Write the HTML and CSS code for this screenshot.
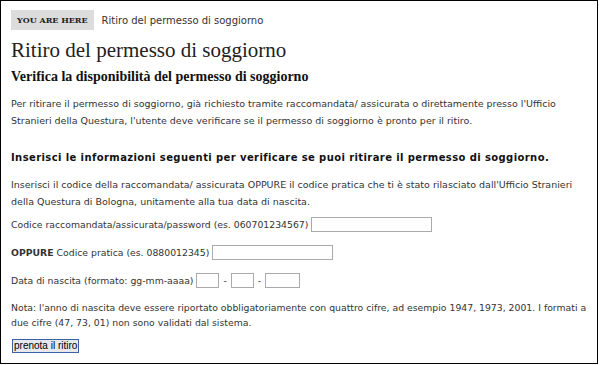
FILE: index.html
```html
<!DOCTYPE html>
<html lang="it">
<head>
    <meta charset="UTF-8">
    <title>Ritiro del permesso di soggiorno</title>
    <link rel="stylesheet" href="styles.css">
</head>
<body>
    <div class="page">
        <div class="crumbs">
            <span class="here">YOU ARE HERE</span>
            <span class="crumb">Ritiro del permesso di soggiorno</span>
        </div>
        <h1>Ritiro del permesso di soggiorno</h1>
        <h2>Verifica la disponibilità del permesso di soggiorno</h2>
        <p class="intro">Per ritirare il permesso di soggiorno, già richiesto tramite raccomandata/ assicurata o direttamente presso l'Ufficio Stranieri della Questura, l'utente deve verificare se il permesso di soggiorno è pronto per il ritiro.</p>

        <h3>Inserisci le informazioni seguenti per verificare se puoi ritirare il permesso di soggiorno.</h3>
        <p class="intro">Inserisci il codice della raccomandata/ assicurata OPPURE il codice pratica che ti è stato rilasciato dall'Ufficio Stranieri della Questura di Bologna, unitamente alla tua data di nascita.</p>

        <form class="check-form">
            <div class="row">
                <label for="racc">Codice raccomandata/assicurata/password (es. 060701234567)</label>
                <input type="text" id="racc" class="field">
            </div>
            <div class="row">
                <label for="prat"><b>OPPURE</b> Codice pratica (es. 0880012345)</label>
                <input type="text" id="prat" class="field">
            </div>
            <div class="row">
                <label for="gg">Data di nascita (formato: gg-mm-aaaa)</label>
                <input type="text" id="gg" class="field small">
                <span class="dash">-</span>
                <input type="text" class="field small">
                <span class="dash">-</span>
                <input type="text" class="field year">
            </div>
            <p class="note">Nota: l'anno di nascita deve essere riportato obbligatoriamente con quattro cifre, ad esempio 1947, 1973, 2001. I formati a due cifre (47, 73, 01) non sono validati dal sistema.</p>
            <button type="button" class="submit">prenota il ritiro</button>
        </form>
    </div>
</body>
</html>
```

FILE: styles.css
```css
body{
    margin: 0;
    background-color: #fff;
    font-family: "DejaVu Sans", Verdana, sans-serif;
    color: #333;
}
.page{
    box-sizing: border-box;
    width: 598px;
    height: 364px;
    border: 1px solid #000;
    padding: 9px 10px;
}
.crumbs{
    display: flex;
    align-items: center;
    gap: 8px;
}
.here{
    background-color: #dcdcdc;
    font-family: "DejaVu Serif", Georgia, serif;
    font-weight: bold;
    font-size: 8px;
    color: #222;
    padding: 5px 6px;
}
.crumb{
    font-size: 10px;
    color: #333;
}
h1{
    font-family: "Liberation Serif", Georgia, serif;
    font-weight: normal;
    font-size: 21px;
    color: #222;
    margin: 8px 0 6px;
}
h2{
    font-family: "Liberation Serif", Georgia, serif;
    font-size: 14px;
    color: #111;
    margin: 0 0 10px;
}
.intro{
    font-size: 9.5px;
    line-height: 17px;
    margin: 0;
}
h3{
    font-size: 10px;
    letter-spacing: 0.4px;
    color: #111;
    margin: 23px 0 13px;
}
.check-form{
    margin-top: 0;
    font-size: 9.3px;
}
.row{
    display: flex;
    align-items: center;
    gap: 4px;
    height: 28px;
}
.row label{
    margin-right: -1px;
}
.field{
    box-sizing: border-box;
    width: 121px;
    height: 15px;
    border: 1px solid #aaa;
    padding: 0;
}
.field.small{
    width: 23px;
}
.field.year{
    width: 35px;
}
.note{
    font-size: 9.3px;
    line-height: 15px;
    margin: 6px 0 9px;
}
.submit{
    box-sizing: border-box;
    height: 14px;
    margin-left: 1px;
    font-family: "Liberation Sans", Arial, sans-serif;
    font-size: 10px;
    line-height: 12px;
    color: #000;
    padding: 0 1px;
    border: 1px solid #3c5fa8;
    background-color: #e4e8ef;
}
```
